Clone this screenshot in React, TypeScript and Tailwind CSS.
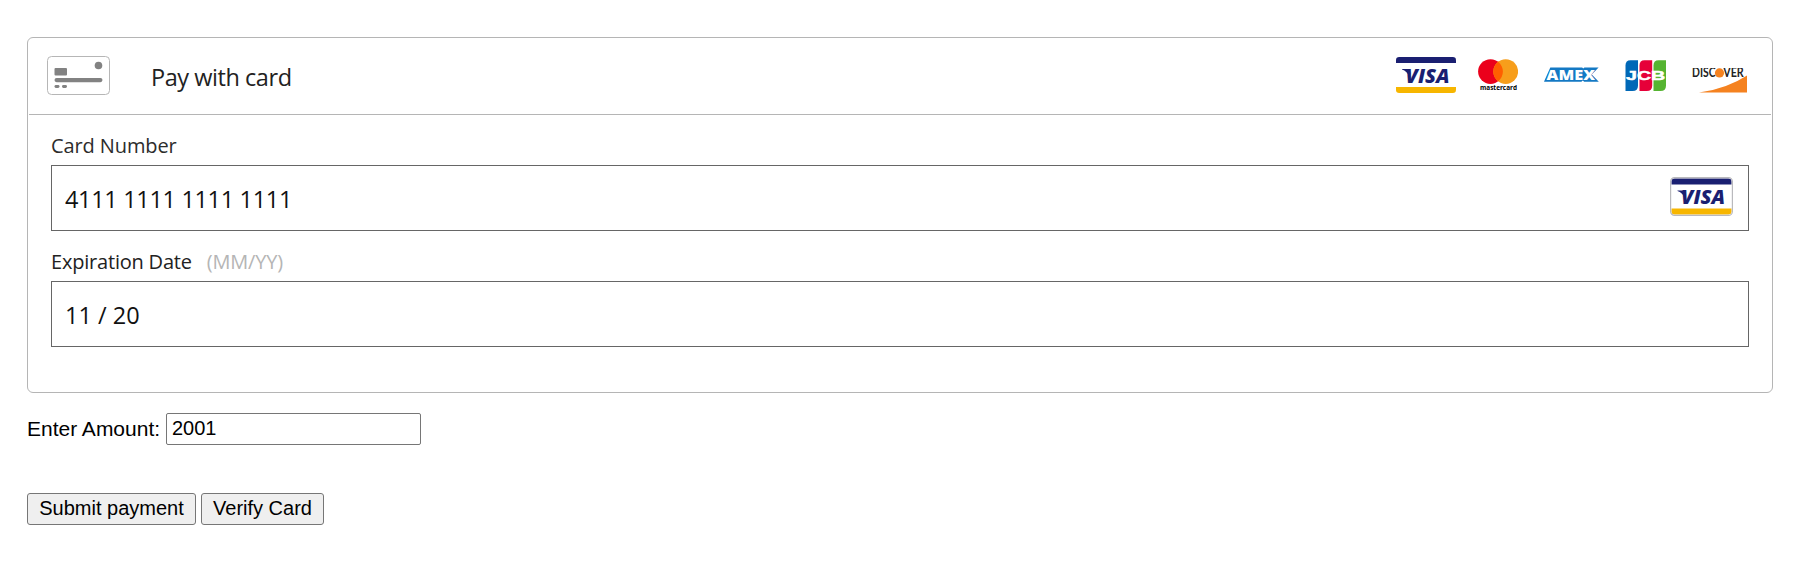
import React from "react";

const sans = "font-['Open_Sans','Noto_Sans',sans-serif]";

function CardIcon() {
  return (
    <svg width="64" height="39" viewBox="0 0 64 39" className="block shrink-0">
      <rect x="0.5" y="0.5" width="62" height="38" rx="4" fill="#fff" stroke="#b6b6b6" />
      <rect x="7.5" y="12" width="12.5" height="7.5" rx="1" fill="#828282" />
      <circle cx="51.5" cy="9.5" r="3.8" fill="#828282" />
      <rect x="7.5" y="22" width="48" height="4.2" rx="2.1" fill="#828282" />
      <rect x="7.5" y="29" width="5" height="3" rx="1.4" fill="#828282" />
      <rect x="15" y="29" width="5" height="3" rx="1.4" fill="#828282" />
    </svg>
  );
}

function VisaMark() {
  return (
    <>
      <path d="M0 6V3.2Q0 0 3.2 0H56.8Q60 0 60 3.2V6Z" fill="#1a1f71" />
      <path d="M0 30H60V32.8Q60 36 56.8 36H3.2Q0 36 0 32.8Z" fill="#f7b600" />
      <path d="M6 12H11Q13.4 12.2 14.3 16L13.8 20Q11 14 6 12.4Z" fill="#1a1f71" />
      <text
        x="9.6"
        y="25.8"
        fontFamily="Open Sans"
        fontWeight="800"
        fontStyle="italic"
        fontSize="19.8"
        textLength="44"
        lengthAdjust="spacingAndGlyphs"
        fill="#1a1f71"
      >
        VISA
      </text>
    </>
  );
}

function Visa() {
  return (
    <svg width="60" height="36" viewBox="0 0 60 36" className="block">
      <VisaMark />
    </svg>
  );
}

function VisaFramed() {
  return (
    <svg width="63" height="39" viewBox="0 0 63 39" className="block">
      <g transform="translate(1.5 1.5)">
        <VisaMark />
      </g>
      <rect x="0.6" y="0.6" width="61.8" height="37.8" rx="4" fill="none" stroke="#b9b9bd" strokeWidth="1.2" />
    </svg>
  );
}

function Mastercard() {
  return (
    <svg width="40" height="34" viewBox="0 0 40 34" className="block">
      <circle cx="12.5" cy="12.6" r="12.4" fill="#eb001b" />
      <circle cx="27.7" cy="12.6" r="12.4" fill="#f79e1b" />
      <path d="M20.1 2.8a12.4 12.4 0 0 1 0 19.6a12.4 12.4 0 0 1 0-19.6Z" fill="#ff5f00" />
      <text
        x="2"
        y="30.9"
        fontFamily="Open Sans"
        fontWeight="700"
        fontSize="6.2"
        textLength="37"
        lengthAdjust="spacingAndGlyphs"
        fill="#000"
      >
        mastercard
      </text>
    </svg>
  );
}

function Amex() {
  return (
    <svg width="55" height="16" viewBox="0 0 55 16" className="block">
      <path
        d="M6.3 0.4H38.2L39.2 1.5L40.4 0.4H54.6L47.8 7.6L54.8 14.8H40.2L38.8 13.4L37.4 14.8H0L0.4 13.8Z"
        fill="#1479c4"
      />
      <text
        x="2.6"
        y="12.9"
        fontFamily="Open Sans"
        fontWeight="800"
        fontSize="14.6"
        textLength="48.4"
        lengthAdjust="spacingAndGlyphs"
        fill="#fff"
      >
        AMEX
      </text>
    </svg>
  );
}

function Jcb() {
  return (
    <svg width="42" height="32" viewBox="0 0 42 32" className="block">
      <path d="M5.5 0.2H13V25.5Q13 31 7.5 31H0.5V5.5Q0.5 0.2 5.5 0.2Z" fill="#0068b7" />
      <path d="M19.5 0.2H27.2V25.5Q27.2 31 21.7 31H14.5V5.5Q14.5 0.2 19.5 0.2Z" fill="#e60039" />
      <path d="M33.5 0.2H41V25.5Q41 31 35.5 31H28.5V5.5Q28.5 0.2 33.5 0.2Z" fill="#55b431" />
      <text
        x="1"
        y="20"
        fontFamily="Liberation Sans"
        fontWeight="700"
        fontSize="13.4"
        stroke="#fff"
        strokeWidth="0.5"
        textLength="39.2"
        lengthAdjust="spacingAndGlyphs"
        fill="#fff"
      >
        JCB
      </text>
    </svg>
  );
}

function Discover() {
  return (
    <svg width="56" height="26" viewBox="0 0 56 26" className="block">
      <path d="M7 24.6Q35 20.5 55 7.4V24.6Z" fill="#f58220" />
      <g fontFamily="Lato" fontWeight="700" fontSize="12.3" fill="#222">
        <text x="0" y="9.4" textLength="23.5" lengthAdjust="spacingAndGlyphs">
          DISC
        </text>
        <text x="31.2" y="9.4" textLength="20.6" lengthAdjust="spacingAndGlyphs">
          VER
        </text>
      </g>
      <circle cx="27.5" cy="4.9" r="4.6" fill="#f58220" />
    </svg>
  );
}

export default function App() {
  return (
    <main className="h-[562px] w-full bg-white px-[27px] pt-[37px] font-['Liberation_Sans',Arial,sans-serif] text-black">
      <section className={`mr-[8px] h-[356px] rounded-md border border-[#b5b5b5] ${sans}`}>
        <header className="mx-px flex h-[77px] items-start border-b border-[#b5b5b5] pl-[18px]">
          <div className="pt-[18px]">
            <CardIcon />
          </div>
          <h1 className="ml-[40px] pt-[23px] text-[23.5px] leading-8 font-normal tracking-[-0.45px] text-[#222]">
            Pay with card
          </h1>
          <div className="mr-[23px] ml-auto flex">
            <div className="w-[82px] pt-[19px]">
              <Visa />
            </div>
            <div className="w-[66px] pt-[21px]">
              <Mastercard />
            </div>
            <div className="w-[81px] pt-[29px]">
              <Amex />
            </div>
            <div className="w-[67px] pt-[22px]">
              <Jcb />
            </div>
            <div className="w-[56px] pt-[30px]">
              <Discover />
            </div>
          </div>
        </header>

        <div className="px-[23px] pt-[17px]">
          <label htmlFor="number" className="block h-[33px] text-[20px] leading-7 tracking-[-0.1px] text-[#2c2c2c]">
            Card Number
          </label>
          <div className="flex h-[66px] items-center border border-[#666] pr-[15px] pl-[13px]">
            <input
              id="number"
              defaultValue="4111 1111 1111 1111"
              className="h-8 min-w-0 flex-1 pt-[2px] text-[23.5px] leading-8 tracking-[-0.33px] text-[#111] outline-none"
            />
            <div className="mb-[4px]">
              <VisaFramed />
            </div>
          </div>

          <label htmlFor="expiry" className="mt-[17px] flex h-[33px] text-[20px] leading-7 tracking-[-0.2px] text-[#222]">
            Expiration Date
            <span className="ml-[15px] text-[#b5b5b5]">(MM/YY)</span>
          </label>
          <div className="flex h-[66px] items-center border border-[#666] px-[13px]">
            <input
              id="expiry"
              defaultValue="11 / 20"
              className="h-8 min-w-0 flex-1 pt-[2px] text-[23.5px] leading-8 text-[#111] outline-none"
            />
          </div>
        </div>
      </section>

      <div className="mt-[20px] flex h-8 items-center text-[20px] leading-6">
        <label htmlFor="amount" className="w-[139px] text-[21px]">
          Enter Amount:
        </label>
        <input
          id="amount"
          defaultValue="2001"
          className="h-8 w-[255px] rounded-[2px] border border-[#767676] px-[5px] pb-[1px] outline-none"
        />
      </div>

      <div className="mt-[48px] flex gap-[5px] text-[20px] leading-6">
        <button className="h-8 w-[169px] rounded-[3px] border border-[#767676] bg-[#efefef] pb-[2px]">Submit payment</button>
        <button className="h-8 w-[123px] rounded-[3px] border border-[#767676] bg-[#efefef] pb-[2px]">Verify Card</button>
      </div>
    </main>
  );
}
